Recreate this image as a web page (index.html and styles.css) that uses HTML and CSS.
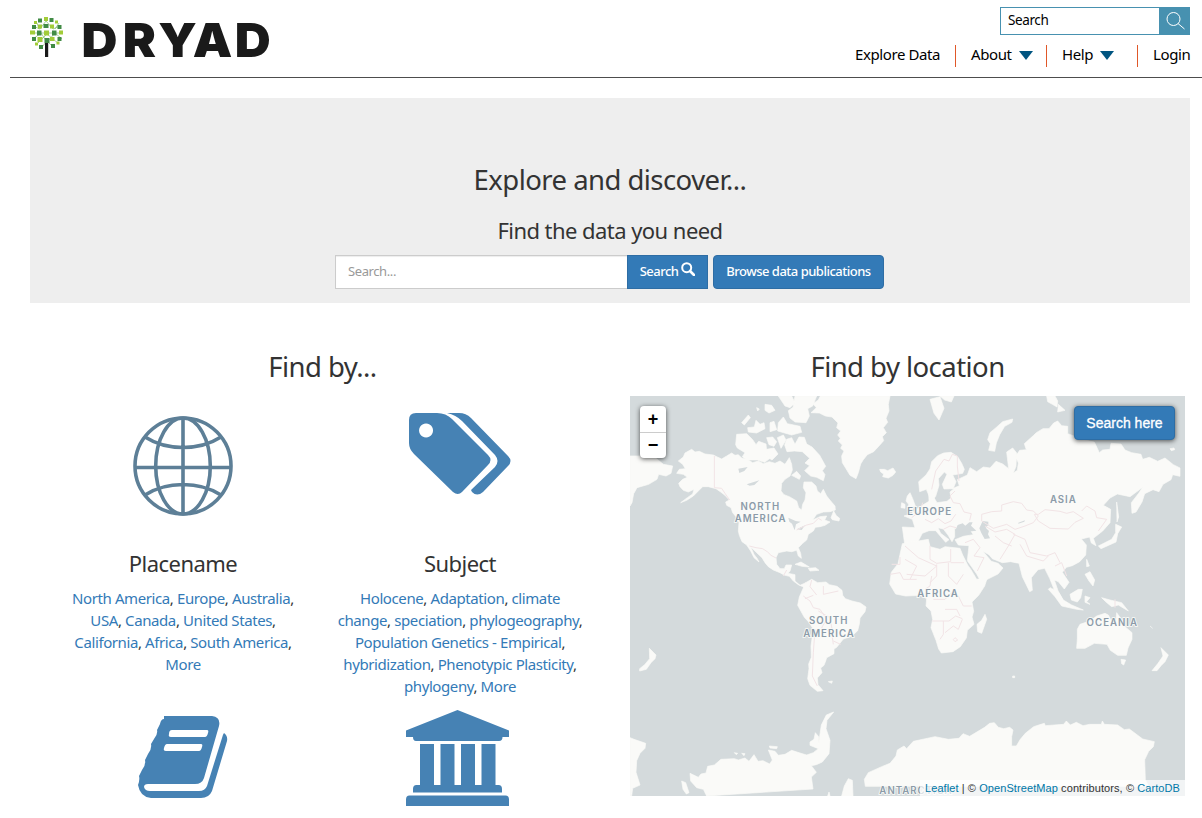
FILE: index.html
```html
<!DOCTYPE html>
<html lang="en">
<head>
<meta charset="utf-8">
<title>Dryad</title>
<link rel="stylesheet" href="styles.css">
</head>
<body>
<header class="header">
  <a class="logo" aria-label="Dryad">
    <svg width="250" height="56" viewBox="0 0 250 56">
      <g stroke="#7fb96b" stroke-width=".7" fill="none"><path d="M4 9l7 3 6-8 7 8 7-3M3 16h31M4 22l8-6 6 9 8-9 7 6M8 27l10-10 12 10M13 30l5-6 6 6M8 6l2 6M30 6l-4 6"/></g>
      <g fill="#418b45"><path d="M9 1.500h4v4H9zM20.500 1h4v4h-4zM3 8h4v4H3zM14.500 7h5v4h-5zM28.500 8h4v4h-4zM8 13.500h4.500v5H8zM23 13.500h4.500v5H23zM3 20h4v4H3zM15.500 21h5v5h-5zM28.500 20h4v4h-4zM10 28h4v4h-4zM22 27h4v4h-4z"/></g>
      <g fill="#a2cc38"><path d="M15 0h4v4h-4zM5 4h3v3H5zM26 3.500h3v3h-3zM9 7.500h4v4H9zM21 7.500h4v4h-4zM1 13.500h5v4H1zM15 13.500h5v5h-5zM30 13.500h4v4h-4zM8.500 20h5v5h-5zM21 20h4.500v4H21zM6 25.500h3v3H6zM27.500 24.500h3v3h-3z"/></g>
      <path d="M16 26h3.200v14H16z" fill="#1a1a1a"/>
      <text class="wordmark" transform="scale(1.06 1)" y="40" x="49.500 88.500 122 154.500 194">DRYAD</text>
    </svg>
  </a>
  <div class="header-right">
    <form class="site-search">
      <span class="site-search-field">Search</span>
      <span class="site-search-button"><svg width="20" height="20" viewBox="0 0 20 20" fill="none" stroke="#fff" stroke-width="1"><circle cx="8.500" cy="8" r="6.500"/><path d="M13 12.500l6.500 5.500"/></svg></span>
    </form>
    <nav class="nav">
      <a class="nav-explore">Explore Data</a>
      <a class="nav-about">About<i class="caret"></i></a>
      <a class="nav-help">Help<i class="caret"></i></a>
      <a class="nav-login">Login</a>
    </nav>
  </div>
</header>
<main class="main">
  <section class="jumbotron">
    <h1 class="title hero-title">Explore and discover...</h1>
    <h2 class="subtitle hero-subtitle">Find the data you need</h2>
    <div class="hero-form">
      <span class="hero-input">Search...</span>
      <span class="hero-button">Search <svg width="14" height="14" viewBox="0 0 14 14" fill="none" stroke="#fff"><circle cx="5.700" cy="5.700" r="4.500" stroke-width="2"/><path d="M9 9l4 4" stroke-width="2.600" stroke-linecap="round"/></svg></span>
      <span class="browse-button">Browse data publications</span>
    </div>
  </section>
  <div class="columns">
    <section class="find-by">
      <h2 class="title">Find by...</h2>
      <div class="facets">
        <article class="facet placename">
          <div class="facet-icon"><svg width="102" height="102" viewBox="0 0 102 102" fill="none" stroke="#5d7f97" stroke-width="3.600"><circle cx="51" cy="51" r="48"/><ellipse cx="51" cy="51" rx="27.300" ry="48"/><path d="M51 3v96M3 52.500h96M13 22c22 14 54 14 76 0M13 80c22-14 54-14 76 0"/></svg></div>
          <h3 class="subtitle">Placename</h3>
          <p class="links"><a>North America</a>, <a>Europe</a>, <a>Australia</a>,<br><a>USA</a>, <a>Canada</a>, <a>United States</a>,<br><a>California</a>, <a>Africa</a>, <a>South America</a>,<br><a>More</a></p>
        </article>
        <article class="facet subject">
          <div class="facet-icon"><svg width="104" height="104" viewBox="0 0 104 104" fill="#4682b4"><path fill-rule="evenodd" d="M1 8q0-7 7-7h21q9 0 15 6l36 36q5 5 0 10L54 80q-4 4-9 0L6 42q-5-5-5-11zm17 3.500a7 7 0 1 0 .1 0z"/><path d="M39 1h12q7 0 12 5l37 38q5 5 0 10L75 80q-6 5-11 0l-1-2 24-23q5-6 0-12L54 9q-6-6-15-8z"/></svg></div>
          <h3 class="subtitle">Subject</h3>
          <p class="links"><a>Holocene</a>, <a>Adaptation</a>, <a>climate</a><br><a>change</a>, <a>speciation</a>, <a>phylogeography</a>,<br><a>Population Genetics - Empirical</a>,<br><a>hybridization</a>, <a>Phenotypic Plasticity</a>,<br><a>phylogeny</a>, <a>More</a></p>
        </article>
        <div class="facet book"><svg width="90" height="84" viewBox="0 0 90 84" fill="#4682b4"><path d="M26 1h48q9 1 7 10L66 63q-2 6-9 6H10q-4 0-4 3 1 4 6 4h49q6 0 8-5L84 23q1-4 2-5 4 3 3 8L74 76q-3 7-11 7H13Q2 82 0 70q2-5 1-9l3-6q4-5 3-10l3-6q4-5 3-10l3-5q4-5 3-9l3-6q1-5 4-5z"/><path d="M34 15h35q2 0 1 3-1 4-3 4H33q-3 0-2-3 0-4 3-4zM29 29h34q2 0 1 3-1 4-3 4H28q-3 0-2-3 1-4 3-4z" fill="#fff"/></svg></div>
        <div class="facet bank"><svg width="104" height="97" viewBox="0 0 104 97" fill="#4682b4"><path d="M51.500 0L103 20.500V27h-6.500q0 4-3.500 4H10q-3 0-3-4H0v-6.500zM14 34h14v41H14zM34.500 34h14v41h-14zM55 34h14v41H55zM75.500 34h14v41h-14zM10.500 75H92.500q3.500 0 3.500 4v3.500H7V79q0-4 3.500-4zM3.500 85.500h96q3.500 0 3.500 4V96H0v-6.500q0-4 3.500-4z"/></svg></div>
      </div>
    </section>
    <section class="find-location">
      <h2 class="title">Find by location</h2>
      <div class="map">
        <svg class="map-canvas" width="555" height="400" viewBox="0 0 1665 1200">
          <g class="land">
            <path d="M145 195L160 183 165 171 185 160 195 168 208 166 225 174 250 177 262 183 275 189 290 180 305 171 315 178 325 176 335 186 352 190 368 200 385 195 400 203 418 197 435 202 450 195 465 205 478 185 485 205 487 222 480 240 465 250 455 262 453 285 462 296 478 302 500 315 506 335 515 342 518 325 525 312 528 290 520 275 522 258 545 258 558 270 562 285 572 293 580 280 590 300 602 315 615 330 616 342 600 347 580 348 560 355 548 372 570 362 590 360 584 372 600 378 585 388 570 392 556 394 550 405 535 415 530 432 518 442 505 455 512 472 514 487 505 480 500 463 485 467 470 465 445 470 438 485 440 505 450 518 463 518 468 507 485 507 480 525 474 532 495 536 495 555 510 568 528 560 522 574 505 566 490 555 478 541 462 537 450 530 430 522 415 512 405 500 396 485 380 470 362 453 372 475 382 488 387 498 372 485 362 465 350 447 336 437 328 418 325 405 327 380 318 362 308 350 303 335 290 328 287 318 298 312 285 298 272 288 258 278 235 272 218 272 205 285 190 300 170 313 152 320 172 305 188 294 192 280 175 288 160 283 150 272 146 262 158 250 172 244 160 235 140 232 148 220 166 218 158 205z"/>
            <path d="M527 560l18-10 18 10 25-2 10 8 23 5 15 12 2 15 8 10 20 7 25 6 17 12-3 14-15 19-2 18-5 20-18 17-25 8-20 25-8 5v14l-22 12-3 10-5 13-10 8 4 14-14 16 2 20 15 18-17 2-22-18-7-20 4-30-1-14 8-20-1-34 7-50-12-20-15-16-20-36 5-25z"/>
            <path d="M543 50l16-15-10-12 16-11 6-12h209l-5 25 2 20-9 22 5 12-13 16 9 15-12 12 4 12-16 18-14 15-19 9-12 15-8 13-7 26-7 18-18-10-15-25-8-13-2-20 7-15-10-8 5-10-12-12 6-8-8-10 9-12-12-10 4-14-18-18-20-3-18-9z"/>
            <path d="M752 228l-3-8 14 0 10 4 16-8 8 12-8 10-14 8-17-4 3-8zM445 0h40l10 20-15 15-15-5-10-15zM495 0h65l-12 30-15 8 5 22-10 20-33-2-15-12-5-22 14-10zM335 80l20-23 6 8-18 22zM353 95l20-2 5-20 12 12 12-5 3 18-25 13-25-3zM320 115l30-2 18 18 10 15 8-10 22 8 2 22 14 18-20 15-22-7-30 0-15-10 8-12-23-14-5-10zM445 80l15-17 12 20 38 8 5 18-30 8-42-12zM470 130l15-5 10 20 12-22 16 1 7 20 16 9 23 25 18 33-10 13 8 12-5 18-20-10-18-4-18-16 15-15-14-8 14-14-22-20-24-2-22 2-7-20zM410 125l18-2 12 14-8 14-15-5zM442 125l18-8 8 15-15 25zM410 160l22-4 12 18-18 18-18-12zM420 80l12-4 8 25-20 6zM380 35l8 4-5 6zM405 25l20 3 10 15-18 8-12-8zM485 238l15-12 12 14-4 10zM603 365l8-20 8 14 10 8-2 8-20-4zM0 180h70l30 25 28 5-5 22-15 8-22-5-5 15-25 15-35 10-10 18-5 27-6 10zM495 505l18-7 25 15-22-2zM535 517l22-2 10 8-27 2z"/>
            <path d="M58 757l20 20-3 11-12 12-14 20-20 5 0-7 15-12 15-18zM0 1025l12 5 35 12-2 15-15 15-10 22-2 35 12 38-22 10-3 23H0zM155 1155l12 5 10 30-8 4-10-14zM230 1200l-10-20-20-5-18-20-2-23 25 12 8-10 15-3 5-20 20-4 20-17 40-2 12 4 20-6 12 10 15-20 12 20 15-2 20 10 8-12-12-30 20 4 10 12 20-3 20-12 25 8 20 6 20-7 15-12-25-10 0-10 12-8 4-20 10 12v20l8-55 15-30 22-9-20 25-3 25 12 35-3 40-20 25-18 8-15 3 15 20-15 14 5 36zM418 1050l24 2-2 6-20-2zM313 1070l10 2-4 4zM335 1072l10 1-3 6zM635 1200l8-30 12-22 12 5 2 47zM593 1200l4-12 3 12zM595 857l12-2-2 7z"/>
            <path transform="translate(825)" d="M-8 393l38 2-8-25-25-10 20-6 15-12 20-14 20-12-1-30 16-8-3 22 12 20 30-4 12-10-3-18 12-10-30 1-5-14 14-30-8-7-18 20 2 20-10 33-12 15-6-12-10-24-20 7-3-30 22-20 12-18 5-22 18-18 18-8 22-2 20 13 12 20 8 18-5 12-30 5 10 20-8 20 18-8-6-18 30-14 8-22 20 12 20-14 20 3 18-20 20 8 18 14-6-50 18-12 12 15-2 40-8 20 12-8 3-22-8-20 12-18 20-2-6-18 28-25 8-8 20-12 18 0 14-17 12-6 12 14 18 2 0 22 55 20 25 5 15 32 10-8 22-2 3-18 30 2 12 18 20 8 28 5 5 15 20-6 25 12 22-10 25 20 20 10v25l-22-5-5 15-24 14-12 22-18-6-25 12-8 25-18 30-12 4-2-32 22-28 12-18-38 28-38-8-22 12-20 22 22 12-2 40-22 25-28 22 8 22-14-8-5-18-25 6 15 18-2 30-18 20-22 12-18 5-12 15 20 30-14 20-18-22-12-5 12 35 16 30-20-15-22-55-15-30-20 4-20 24 3 38-8 4-22-45-10-40-25-5-25 3-30-12-10-12-18-10 25 30 20 6 15 14-15 18-50 25-14-25-28-40 5-45-32-2-10-16 25-10 30-5-10-15-20-8-14 8-12-4 0 25-8 15-12-20-14-18-16-4 8 17 25 19-10 8-30-35-20 0-20 8-15 28-38 4z"/>
            <path transform="translate(825)" d="M-8 443l78-13 5 22 30 8 15-8 45 5 8 20 15 30 10 14 17 29 32-5-8 25-18 28-20 20 5 28-5 17 6 22-20 18-3 23-18 26-22 15-35 4-8-12-8-26-15-38 5-25-5-25-15-15 2-22-18-10-45 2-30-6-18-30 5-35 20-26z"/>
            <path transform="translate(825)" d="M7 300l8-10 8 18 8 22-25 10 5-15-8-10zM-10 320l10 5 0 12-12-2zM255 110l18-15 20-18 30-8-2 10-22 12-15 25-10 25-5 25-18-3 5-20-8-12zM75 10l30-8 12 35-15 35-15-20zM105 0h42l-8 18-20-6zM425 0h25l8 15-2 18-14-8-14-8zM460 25l20 18-22 5zM795 158l12-2 2 5-10 3zM635 318l6 45-5 15zM632 385l18 8-12 20-5 25-45 20-8-8 40-20 12-20zM545 490l8 20-8 2zM540 535l15-8 14 25-5 18-12-15zM435 575l25 12 15 25 25 15 35 15-20-2-45-10-20-28-20-22zM495 595l25-15 12 0-5 25-10 13-18-6zM540 600l15 5-10 12 10 8-15-6zM590 605l25 7 35 8 20 25-30-18-20 5-18-15zM240 655l5 15-15 42-12-5-2-22 14-12zM517 700l8-15 30-10 20-15 25-8 10 5 10 20 12 5 3-32 14 20 4 16 28 24v20l-12 26-5 22-26 0-22-15-10-18-38-3-28 15-25 0 2-28zM648 790l14 2-6 15-6-4zM768 755l22 22-10 20-12 12-12 15-15 0 18-22 15-22zM735 690l8 7M370 565l7 5-3 6zM323 840h6v5h-6zM-122 1150l12-20 40-18 25-10 18-22 4-18 20-12 8 8 20-22 65-14 40 8 32-3 12-14 20 8 45-27 15-12 14-2 12 14 16 4 18-4 10 8-4 20 0 28 14 0 12-20 15-18 25-20 22-7 10-3 3 7 55-4 8-10 12 12 18-8 20 10 20-4 35 0 3-10 6 10 40 2 20 14 15-2 40 30 35 8-3 15-14 14-12 25 2 60 10 20h-850z"/>
          </g>
          <g fill="#d4dadc">
            <path d="M975 405l8-18 15-5 8 7 12-10 10 0-5 10 16 15-28 3zM1058 375l17 2 0 10-8 8 10 10-3 10 6 12-16 2-10-18-6-14zM325 218l28-5-10 12-15 6zM350 265l38-12-15 14-14 2zM475 365l22 10 15 2-14 8-4 18-8-20-8-6zM500 400l25-12-10 14zM1165 380l20-7-2 4-18 6z"/>
          </g>
          <g class="borders" transform="translate(825)">
            <path d="M80 280l12-55 25-35 15 5 10-20 15 5v30l5 45M150 285l-15 15 10 20 20 3 12 25 22 5-5 20M60 370l20 10 20-12 20 15 18-8 14-20M20 365l25-20 8-25M115 400l20-10 18 5M230 375l0-20 30-8 30-2 0-18 35-10 25 5 15 20 20 3 15 15-15 20-25 10-30 10-25-15-40 12zM400 355l20-14 45 5 20 6 20-5 30 20-25 12-20 20-55-2-35-22-12-20zM530 345l15-15 25 15 5 20 30 5-25 35M180 440l25-10 20 25-18 25 30 5-20 40M240 390l30 18 35-8 25 15-20 35-25 40M325 415l35 15 15 40 50 10 25-10 15 30M345 445l20 35 50 15 15-15M270 420l25 20 25 10M450 510l20-10 15 40M0 450l40 35 55 25-35 30-55-5M75 450v40l20 12 42-5v-38M137 500h40M95 505v35l-20 20M130 500v40l25 25 20-30M0 490l35 20-20 40M85 610l35 0 20-20 20 10 15 30 25 0M82 675h50l20-15 20 8M115 675v40l-10 15M120 640h35l10 20M120 710l25-20 15 10 12-30M150 725l8 7-8 5-5-6zM-40 505h25v-22M-45 535l30-5 10 20 40 0M60 580l15-10 5-30M630 610v25"/>
          </g>
          <g class="borders"><path d="M253 180v95l22 2 10 15 14 20M358 450l20 5 20 3 15 10 10 10 15 8M500 402l30-15 20-5 15-15 10 6M545 552l-5 20 20 25M520 600l20 15 10 20 20 5 20 30-15 25 30 15 5 35M555 700l-5 70-3 70 15 30M525 608l25-10M580 570v25l45-10M565 645l35 20 8 45M610 735l22 10M460 540l10-18"/></g>
          <g class="map-labels">
            <text x="391" y="341">NORTH</text><text x="392" y="377">AMERICA</text>
            <text x="596" y="685">SOUTH</text><text x="597" y="722">AMERICA</text>
            <text x="899" y="358">EUROPE</text><text x="1300" y="322">ASIA</text>
            <text x="924" y="603">AFRICA</text><text x="1447" y="691">OCEANIA</text>
            <text x="858" y="1193">ANTARCTICA</text>
          </g>
        </svg>
        <div class="zoom-control"><span>+</span><span>−</span></div>
        <span class="search-here">Search here</span>
        <div class="attribution"><a>Leaflet</a> | © <a>OpenStreetMap</a> contributors, © <a>CartoDB</a></div>
      </div>
    </section>
  </div>
</main>
</body>
</html>
```
FILE: styles.css
```css
* { box-sizing: border-box; }
body {
  margin: 0;
  height: 818px;
  overflow: hidden;
  background: #fff;
  color: #333;
  font: 15px/22px "Noto Sans", "Open Sans", sans-serif;
  letter-spacing: -.4px;
}
h1, h2, h3, p { margin: 0; font-weight: 400; }
.header {
  display: flex;
  justify-content: space-between;
  height: 78px;
  margin-left: 10px;
  padding: 7px 12px 0 19px;
  border-bottom: 1px solid #4d4d4d;
}
.logo { padding-top: 10px; }
.logo svg { display: block; overflow: visible; }
.wordmark { font: 900 47px "Inter", sans-serif; letter-spacing: 0; fill: #1a1a1a; }
.header-right { display: flex; flex-direction: column; align-items: flex-end; color: #000; }
.site-search { display: flex; width: 190px; height: 28px; border: 1px solid #4791b0; }
.site-search-field { flex: 1; padding: 1px 7px; font-size: 13.5px; }
.site-search-button { display: flex; align-items: center; justify-content: center; width: 30px; padding-left: 2px; background: #4791b0; }
.nav { display: flex; margin-top: 10px; white-space: nowrap; }
.nav a { height: 22px; line-height: 19px; }
.nav a + a { border-left: 1px solid #e05829; padding-left: 15px; }
.nav-explore { width: 100px; }
.nav-about, .nav-help { width: 91px; }
.nav-login { width: 53px; }
.caret { display: inline-block; margin-left: 7px; border: 7px solid transparent; border-top: 9px solid #005581; border-bottom: 0; }
.main { padding: 20px 12px 0 30px; }
.title { font-size: 27.5px; line-height: 32px; text-align: center; letter-spacing: -.55px; }
.subtitle { font-size: 22px; line-height: 26px; text-align: center; letter-spacing: -.55px; }
.jumbotron { height: 205px; padding-top: 66px; background: #eee; }
.hero-subtitle { margin-top: 21px; }
.hero-form { display: flex; justify-content: center; margin-top: 12px; padding-right: 1px; font-size: 13px; line-height: 31px; white-space: nowrap; }
.hero-input { width: 292px; height: 34px; padding-left: 12px; border: 1px solid #ccc; border-right: 0; background: #fff; box-shadow: inset 0 1px 1px rgba(0,0,0,.075); color: #999; }
.hero-button, .browse-button { height: 34px; border: 1px solid #2e6da4; background: #337ab7; color: #fff; font-weight: 500; text-align: center; letter-spacing: -.5px; }
.hero-button { width: 81px; }
.browse-button { width: 171px; margin-left: 5px; border-radius: 4px; }
.columns { display: grid; grid-template-columns: 585px 555px; gap: 15px; padding-top: 48px; }
.facets { display: grid; grid-template-columns: 306px 248px; grid-template-rows: 314px 100px; padding-top: 13px; }
.facet { display: flex; flex-direction: column; align-items: center; white-space: nowrap; }
.facet-icon { height: 152px; padding-top: 19px; }
.subject .facet-icon { padding-top: 16px; }
.facet .subtitle { margin-top: 2px; }
.links { margin-top: 11px; text-align: center; }
.links a { color: #337ab7; }
.bank svg { margin-left: -4px; }
.book { padding-top: 5px; }
.map { position: relative; height: 400px; margin-top: 13px; overflow: hidden; background: #d4dadc; font-family: "Liberation Sans", sans-serif; letter-spacing: 0; }
.map-canvas { display: block; }
.land { fill: #fafaf8; stroke: #fafaf8; stroke-width: 2; stroke-linejoin: round; }
.borders { fill: none; stroke: #f2e4e6; stroke-width: 3; stroke-linejoin: round; }
.map-labels { font: 600 29px "Inter", sans-serif; letter-spacing: 3px; fill: #8b9ba8; stroke: #fafaf8; stroke-width: 5px; paint-order: stroke; text-anchor: middle; }
.zoom-control { position: absolute; left: 10px; top: 10px; width: 26px; border-radius: 4px; background: #fff; box-shadow: 0 1px 5px rgba(0,0,0,.65); }
.zoom-control span { display: block; height: 26px; color: #000; font-weight: 700; font-size: 18px; line-height: 26px; text-align: center; }
.zoom-control span + span { border-top: 1px solid #ccc; line-height: 24px; }
.search-here { position: absolute; right: 10px; top: 10px; width: 101px; height: 34px; border: 1px solid #2e6da4; border-radius: 4px; background: #337ab7; box-shadow: 0 1px 5px rgba(0,0,0,.65); color: #fff; font-size: 14px; line-height: 32px; text-align: center; -webkit-text-stroke: .3px #fff; }
.attribution { position: absolute; right: 0; bottom: 0; padding: 0 5px; height: 16px; background: rgba(255,255,255,.7); font-size: 11px; letter-spacing: .085px; line-height: 16px; white-space: nowrap; }
.attribution a { color: #0078a8; }
```
